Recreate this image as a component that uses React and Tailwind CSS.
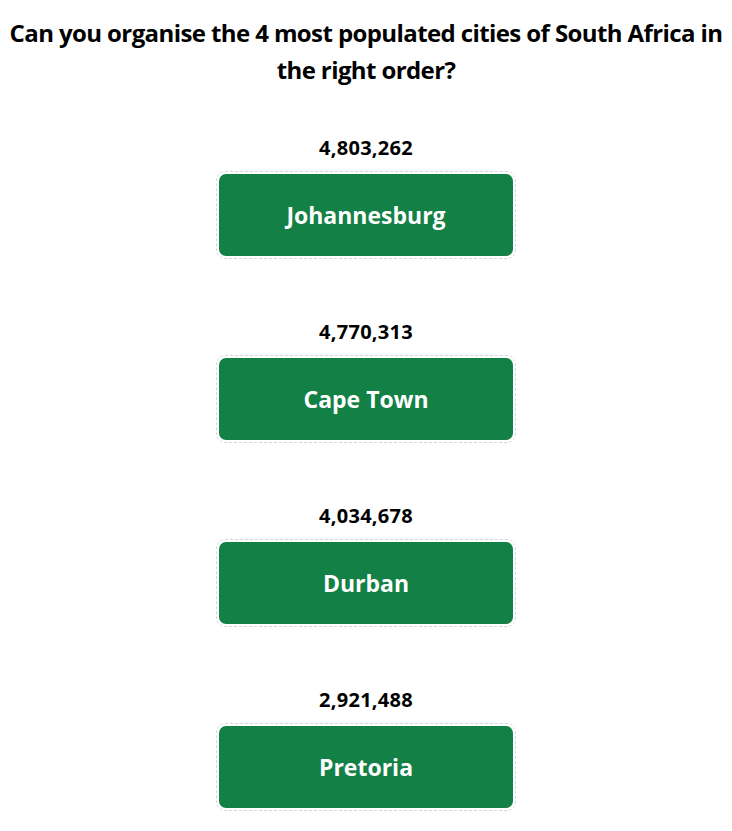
import React from "react";

const cities = [
  { pop: "4,803,262", name: "Johannesburg" },
  { pop: "4,770,313", name: "Cape Town" },
  { pop: "4,034,678", name: "Durban" },
  { pop: "2,921,488", name: "Pretoria" },
];

export default function App() {
  return (
    <div
      className="w-[732px] min-h-[831px] bg-white text-black"
      style={{ fontFamily: '"Open Sans", "Noto Sans", sans-serif' }}
    >
      <h1 className="pt-[14px] text-center text-[24px] leading-[37px] font-bold tracking-[-0.6px]">
        Can you organise the 4 most populated cities of South Africa in the right order?
      </h1>
      <div className="flex flex-col items-center mt-[46px] gap-[59px]">
        {cities.map((c) => (
          <div key={c.name} className="flex flex-col items-center">
            <div className="text-[20px] leading-[27px] font-bold tracking-[0.3px]">{c.pop}</div>
            <div className="mt-[10px] w-[300px] h-[88px] border border-dashed border-gray-300 rounded-[9px] p-[2px]">
              <div className="w-full h-full bg-[#138046] rounded-[7px] flex items-center justify-center text-white text-[23px] font-bold">
                {c.name}
              </div>
            </div>
          </div>
        ))}
      </div>
    </div>
  );
}
